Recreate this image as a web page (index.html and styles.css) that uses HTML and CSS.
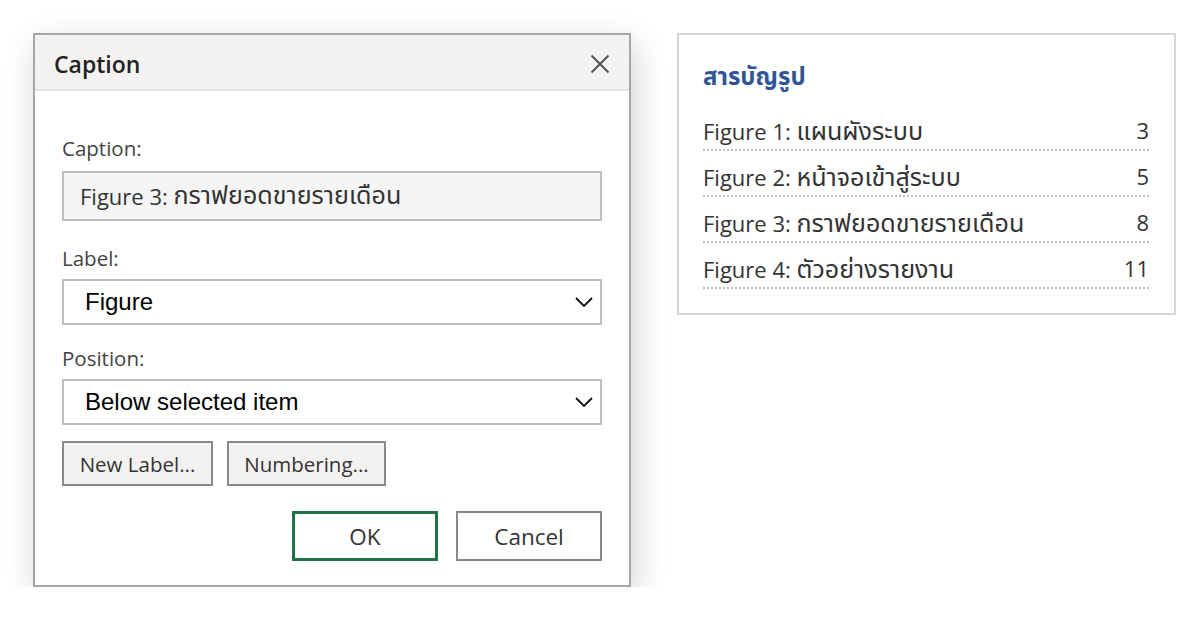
FILE: index.html
```html
<!DOCTYPE html>
<html lang="th">
<head>
<meta charset="utf-8">
<title>Caption</title>
<link rel="stylesheet" href="styles.css">
</head>
<body>
<div class="page">
  <div class="dialog">
    <div class="dialog-header">
      <span class="dialog-title">Caption</span>
      <svg class="close" width="20" height="20" viewBox="0 0 20 20"><path d="M1.5 1.5L18.5 18.5M18.5 1.5L1.5 18.5" stroke="#555" stroke-width="2" fill="none"/></svg>
    </div>
    <div class="dialog-body">
      <div class="group g1">
        <div class="field-label">Caption:</div>
        <div class="input">Figure 3:&nbsp;<span class="th">กราฟยอดขายรายเดือน</span></div>
      </div>
      <div class="group g2">
        <div class="field-label">Label:</div>
        <div class="select"><span>Figure</span><svg width="18" height="10" viewBox="0 0 18 10"><path d="M1 1L9 9L17 1" stroke="#111" stroke-width="1.8" fill="none"/></svg></div>
      </div>
      <div class="group g3">
        <div class="field-label">Position:</div>
        <div class="select"><span>Below selected item</span><svg width="18" height="10" viewBox="0 0 18 10"><path d="M1 1L9 9L17 1" stroke="#111" stroke-width="1.8" fill="none"/></svg></div>
      </div>
      <div class="btn-row">
        <button class="btn btn-new">New Label...</button>
        <button class="btn btn-num">Numbering...</button>
      </div>
      <div class="action-row">
        <button class="btn-action ok">OK</button>
        <button class="btn-action cancel">Cancel</button>
      </div>
    </div>
  </div>
  <div class="toc">
    <div class="toc-title">สารบัญรูป</div>
    <div class="toc-row"><span>Figure 1: <span class="th">แผนผังระบบ</span></span><span>3</span></div>
    <div class="toc-row"><span>Figure 2: <span class="th">หน้าจอเข้าสู่ระบบ</span></span><span>5</span></div>
    <div class="toc-row"><span>Figure 3: <span class="th">กราฟยอดขายรายเดือน</span></span><span>8</span></div>
    <div class="toc-row"><span>Figure 4: <span class="th">ตัวอย่างรายงาน</span></span><span>11</span></div>
  </div>
</div>
</body>
</html>
```
FILE: styles.css
```css
html, body {
  margin: 0;
  padding: 0;
  background: #ffffff;
}
body {
  font-family: "Open Sans", "Noto Sans", "Noto Sans Thai", sans-serif;
  color: #333;
}
.th {
  font-size: 1.14em;
}
.page {
  display: flex;
  align-items: flex-start;
  gap: 46px;
  padding: 33px 0 0 33px;
}
.dialog {
  width: 598px;
  height: 554px;
  box-sizing: border-box;
  border: 2px solid #a6a6a6;
  background: #fff;
  box-shadow: 4px 10px 30px rgba(0,0,0,0.18);
  display: flex;
  flex-direction: column;
}
.dialog-header {
  height: 56px;
  box-sizing: border-box;
  background: #f3f2f1;
  border-bottom: 2px solid #e1e1e1;
  display: flex;
  align-items: center;
  justify-content: space-between;
  padding: 3px 19px 0 19px;
}
.dialog-title {
  font-size: 23px;
  font-weight: 600;
  color: #222;
}
.close { display: block; }
.dialog-body {
  padding: 45px 27px 0 27px;
  display: flex;
  flex-direction: column;
}
.field-label {
  font-size: 20.5px;
  line-height: 24px;
  color: #444;
}
.g1 .field-label { margin-bottom: 11px; }
.g2 .field-label, .g3 .field-label { margin-bottom: 9px; }
.g2 { margin-top: 25px; }
.g3 { margin-top: 21px; }
.input {
  height: 50px;
  box-sizing: border-box;
  border: 2px solid #bdbdbd;
  background: #f5f5f5;
  padding: 0 16px;
  display: flex;
  align-items: center;
  font-size: 22px;
  color: #333;
}
.select {
  height: 46px;
  box-sizing: border-box;
  border: 2px solid #bdbdbd;
  background: #fff;
  padding: 0 7px 0 21px;
  display: flex;
  align-items: center;
  justify-content: space-between;
  font-family: "Liberation Sans", Arial, sans-serif;
  font-size: 24px;
  color: #000;
}
.select svg { display: block; }
.btn-row {
  margin-top: 16px;
  display: flex;
  gap: 14px;
}
.btn {
  height: 45px;
  box-sizing: border-box;
  background: #f3f2f1;
  border: 2px solid #8a8a8a;
  font-family: "Open Sans", "Noto Sans", sans-serif;
  font-size: 20.5px;
  color: #333;
  padding: 0;
}
.btn-new { width: 151px; }
.btn-num { width: 159px; }
.action-row {
  margin-top: 25px;
  display: flex;
  justify-content: flex-end;
  gap: 18px;
}
.btn-action {
  width: 146px;
  height: 50px;
  box-sizing: border-box;
  background: #fff;
  font-family: "Open Sans", "Noto Sans", sans-serif;
  font-size: 22.5px;
  color: #333;
  padding: 0;
}
.ok { border: 3px solid #217346; }
.cancel { border: 2px solid #8a8a8a; }
.toc {
  width: 499px;
  box-sizing: border-box;
  border: 2px solid #d6d6d6;
  padding: 26px 25px 24px 24px;
  background: #fff;
}
.toc-title {
  font-size: 24px;
  font-weight: 700;
  color: #2f5597;
  line-height: 30px;
  margin-bottom: 14px;
}
.toc-row {
  display: flex;
  justify-content: space-between;
  align-items: center;
  font-size: 22px;
  line-height: 30px;
  color: #333;
  height: 46px;
  padding-top: 10px;
  padding-bottom: 4px;
  box-sizing: border-box;
  border-bottom: 2px dotted #bdbdbd;
}
```
